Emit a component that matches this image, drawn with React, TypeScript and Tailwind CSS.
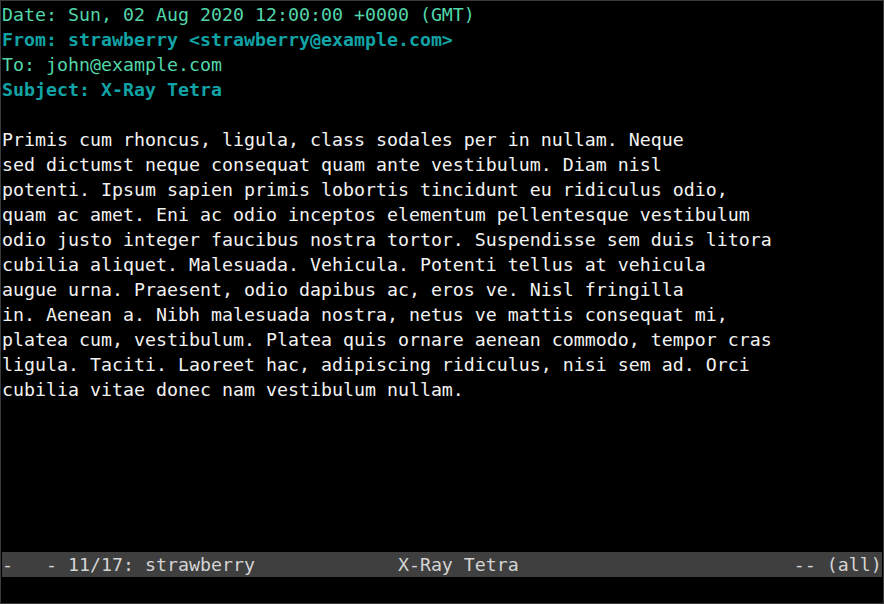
import React from "react";

const body = [
  "Primis cum rhoncus, ligula, class sodales per in nullam. Neque",
  "sed dictumst neque consequat quam ante vestibulum. Diam nisl",
  "potenti. Ipsum sapien primis lobortis tincidunt eu ridiculus odio,",
  "quam ac amet. Eni ac odio inceptos elementum pellentesque vestibulum",
  "odio justo integer faucibus nostra tortor. Suspendisse sem duis litora",
  "cubilia aliquet. Malesuada. Vehicula. Potenti tellus at vehicula",
  "augue urna. Praesent, odio dapibus ac, eros ve. Nisl fringilla",
  "in. Aenean a. Nibh malesuada nostra, netus ve mattis consequat mi,",
  "platea cum, vestibulum. Platea quis ornare aenean commodo, tempor cras",
  "ligula. Taciti. Laoreet hac, adipiscing ridiculus, nisi sem ad. Orci",
  "cubilia vitae donec nam vestibulum nullam.",
];

const status =
  "-   - 11/17: strawberry" +
  " ".repeat(13) +
  "X-Ray Tetra" +
  " ".repeat(25) +
  "-- (all)";

export default function App() {
  return (
    <div
      className="w-[884px] h-[604px] bg-black border border-[#3a3a3a] p-px overflow-hidden flex flex-col text-[18.27px] leading-[25px] whitespace-pre"
      style={{ fontFamily: '"DejaVu Sans Mono", "Liberation Mono", monospace' }}
    >
      <div className="h-[25px] text-[#52d6a9]">Date: Sun, 02 Aug 2020 12:00:00 +0000 (GMT)</div>
      <div className="h-[25px] text-[#11a3a6] font-bold">From: strawberry &lt;strawberry@example.com&gt;</div>
      <div className="h-[25px] text-[#52d6a9]">To: john@example.com</div>
      <div className="h-[25px] text-[#11a3a6] font-bold">Subject: X-Ray Tetra</div>
      <div className="h-[25px]"></div>
      {body.map((l, i) => (
        <div key={i} className="h-[25px] text-[#f2f2f2]">
          {l}
        </div>
      ))}
      <div className="flex-1"></div>
      <div className="h-[25px] bg-[#3f3f3f] text-[#d4d4d4]">{status}</div>
      <div className="h-[25px]"></div>
    </div>
  );
}
